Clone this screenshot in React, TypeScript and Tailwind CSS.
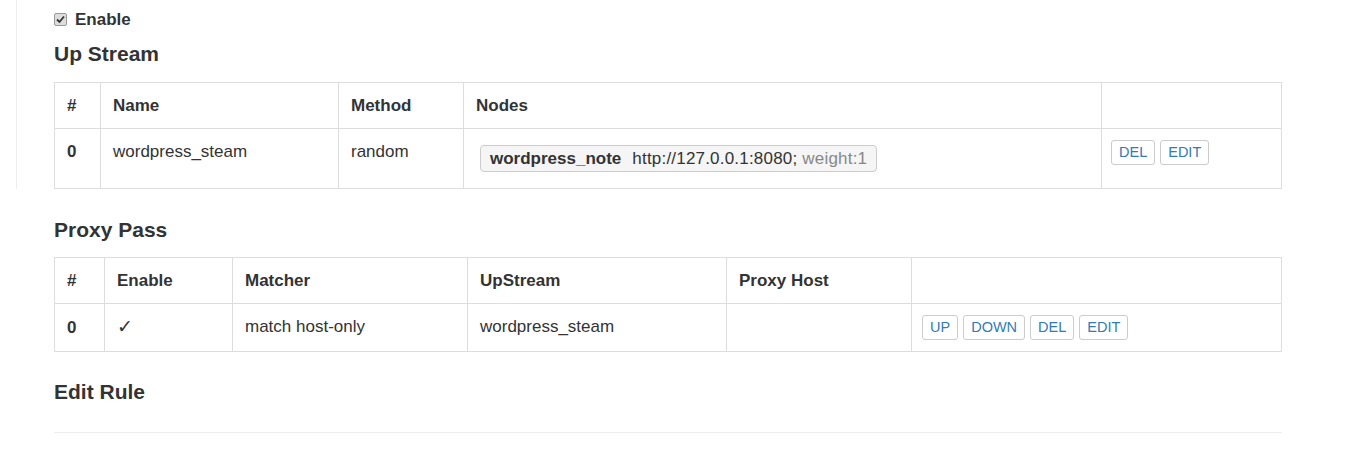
import React from "react";

function Btn({ label }: { label: string }) {
  return (
    <button className="h-[25px] rounded-[3px] border border-[#ccc] bg-white px-[7px] text-[14.5px] leading-[23px] text-[#337ab7]">
      {label}
    </button>
  );
}

const th = "border border-[#ddd] px-[12px] py-[11px] text-left align-top font-bold";
const td = "border border-[#ddd] px-[12px] py-[11px] align-top";

export default function App() {
  return (
    <div className="min-h-[458px] bg-white font-['Liberation_Sans',Arial,sans-serif] text-[17px] leading-[23px] text-[#333]">
      {/* UP STREAM */}
      <div className="ml-[16px] w-[1265px] border-l border-[#eee] pl-[37px] pt-[8px]">
        <label className="flex items-center gap-[8px] font-bold">
          <span className="flex h-[13px] w-[13px] items-center justify-center rounded-[2px] border border-[#999] bg-[#ddd]">
            <svg width="9" height="9" viewBox="0 0 9 9">
              <path d="M1 4.5 L3.5 7 L8 1.5" fill="none" stroke="#333" strokeWidth="1.8" />
            </svg>
          </span>
          Enable
        </label>
        <h3 className="mt-[12px] text-[21px] font-bold leading-[22px]">Up Stream</h3>
        <table className="mt-[17px] w-[1228px] border-collapse">
          <thead>
            <tr>
              <th className={`${th} w-[46px]`}>#</th>
              <th className={`${th} w-[238px]`}>Name</th>
              <th className={`${th} w-[125px]`}>Method</th>
              <th className={`${th} w-[638px]`}>Nodes</th>
              <th className={th}></th>
            </tr>
          </thead>
          <tbody>
            <tr>
              <td className={`${td} font-bold`}>0</td>
              <td className={td}>wordpress_steam</td>
              <td className={td}>random</td>
              <td className={`${td} pb-[16px]`}>
                <span className="mt-[5px] ml-[4px] inline-flex h-[27px] items-center gap-[11px] rounded-[4px] border border-[#ccc] bg-[#f5f5f5] px-[9px]">
                  <b>wordpress_note</b>
                  <span className="tracking-[0.2px]">
                    http://127.0.0.1:8080; <span className="text-[#888]">weight:1</span>
                  </span>
                </span>
              </td>
              <td className={`${td} pl-[9px]`}>
                <div className="flex gap-[5px]">
                  <Btn label="DEL" />
                  <Btn label="EDIT" />
                </div>
              </td>
            </tr>
          </tbody>
        </table>
      </div>

      {/* PROXY PASS */}
      <div className="pl-[54px]">
        <h3 className="mt-[30px] text-[21px] font-bold leading-[22px]">Proxy Pass</h3>
        <table className="mt-[16px] w-[1228px] border-collapse">
          <thead>
            <tr>
              <th className={`${th} w-[50px]`}>#</th>
              <th className={`${th} w-[128px]`}>Enable</th>
              <th className={`${th} w-[235px]`}>Matcher</th>
              <th className={`${th} w-[259px]`}>UpStream</th>
              <th className={`${th} w-[185px]`}>Proxy Host</th>
              <th className={th}></th>
            </tr>
          </thead>
          <tbody>
            <tr>
              <td className={`${td} font-['DejaVu_Sans',sans-serif] text-[19px] font-light`}>
                <span className="font-['Liberation_Sans',Arial,sans-serif] text-[17px] font-bold">0</span>
              </td>
              <td className={`${td} font-['DejaVu_Sans',sans-serif] text-[19px] font-light`}>✓</td>
              <td className={td}>match host-only</td>
              <td className={td}>wordpress_steam</td>
              <td className={td}></td>
              <td className={`${td} pl-[10px]`}>
                <div className="flex gap-[5px]">
                  <Btn label="UP" />
                  <Btn label="DOWN" />
                  <Btn label="DEL" />
                  <Btn label="EDIT" />
                </div>
              </td>
            </tr>
          </tbody>
        </table>

        {/* EDIT RULE */}
        <h3 className="mt-[29px] text-[21px] font-bold leading-[22px]">Edit Rule</h3>
        <hr className="mt-[29px] w-[1228px] border-t border-[#eee]" />
      </div>
    </div>
  );
}
